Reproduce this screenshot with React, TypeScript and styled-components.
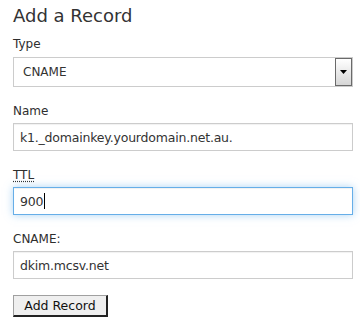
import React from 'react'
import styled, { createGlobalStyle } from 'styled-components'

const GlobalStyle = createGlobalStyle`
  body {
    margin: 0;
    background: #ffffff;
    font-family: "DejaVu Sans", Verdana, sans-serif;
    color: #333333;
  }
`

const Form = styled.form`
  display: flex;
  flex-direction: column;
  width: 340px;
  padding: 4px 0 0 13px;
`

const Heading = styled.h2`
  font-size: 18px;
  font-weight: 400;
  line-height: 24px;
  margin: 0 0 8px 0;
  color: #333333;
`

const Field = styled.div`
  display: flex;
  flex-direction: column;
  gap: 4px;
  margin-bottom: 16px;
`

const Label = styled.label`
  font-size: 12px;
  line-height: 16px;
  color: #2e2e2e;
  & > abbr {
    text-decoration: underline dotted;
    text-underline-offset: 2px;
  }
`

const SelectBox = styled.div`
  display: flex;
  align-items: center;
  justify-content: space-between;
  height: 30px;
  box-sizing: border-box;
  margin-top: 1px;
  border: 1px solid #cccccc;
  background: #ffffff;
  padding-left: 9px;
  font-size: 12px;
`

const DropButton = styled.span`
  display: flex;
  align-items: center;
  justify-content: center;
  width: 17px;
  height: 28px;
  box-sizing: border-box;
  border: 1px solid #6a6a6a;
  background: linear-gradient(#ffffff, #d6d6d6);
`

const TextBox = styled.div<{ $focused?: boolean }>`
  display: flex;
  align-items: center;
  height: 28px;
  box-sizing: border-box;
  padding-left: 6px;
  font-size: 12.5px;
  letter-spacing: -0.2px;
  color: #333333;
  background: #ffffff;
  border: 1px solid ${p => (p.$focused ? '#66aee8' : '#cccccc')};
  box-shadow: ${p =>
    p.$focused
      ? 'inset 0 1px 1px rgba(0,0,0,0.06), 0 0 8px rgba(102,175,233,0.55)'
      : 'inset 0 1px 1px rgba(0,0,0,0.06)'};
`

const Caret = styled.span`
  display: inline-block;
  width: 1px;
  height: 16px;
  background: #000000;
  margin-left: 1px;
`

const SubmitButton = styled.button`
  align-self: flex-start;
  width: 95px;
  height: 22px;
  margin-top: 0;
  padding: 0;
  font-family: "DejaVu Sans", Verdana, sans-serif;
  font-size: 12.5px;
  color: #111111;
  background: #efefef;
  border-style: solid;
  border-width: 1px 2px 2px 1px;
  border-color: #a0a0a0 #222222 #222222 #a0a0a0;
`

export default function App() {
  return (
    <>
      <GlobalStyle />
      <Form onSubmit={e => e.preventDefault()}>
        <Heading>Add a Record</Heading>
        <Field>
          <Label>Type</Label>
          <SelectBox>
            <span>CNAME</span>
            <DropButton>
              <svg width="7" height="4" viewBox="0 0 7 4">
                <path d="M0 0h7L3.5 4z" fill="#000" />
              </svg>
            </DropButton>
          </SelectBox>
        </Field>
        <Field>
          <Label>Name</Label>
          <TextBox>k1._domainkey.yourdomain.net.au.</TextBox>
        </Field>
        <Field>
          <Label>
            <abbr title="Time To Live">TTL</abbr>
          </Label>
          <TextBox $focused>
            900<Caret />
          </TextBox>
        </Field>
        <Field>
          <Label>CNAME:</Label>
          <TextBox>dkim.mcsv.net</TextBox>
        </Field>
        <SubmitButton type="submit">Add Record</SubmitButton>
      </Form>
    </>
  )
}
